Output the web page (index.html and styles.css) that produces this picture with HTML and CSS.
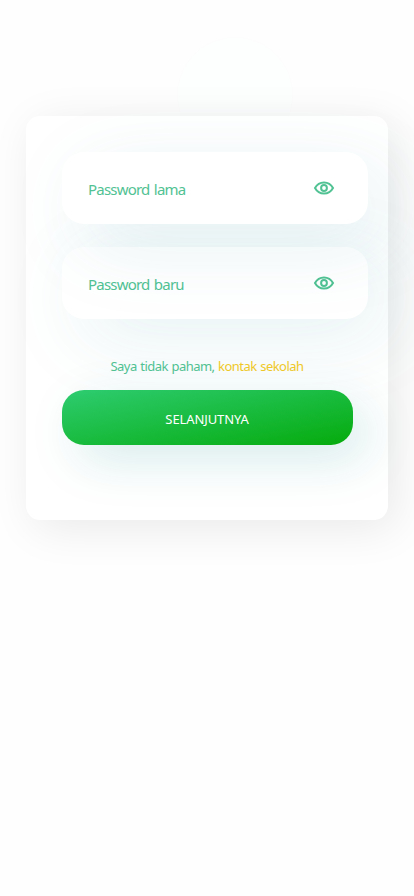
FILE: index.html
```html
<!DOCTYPE html>
<html lang="id">
<head>
<meta charset="UTF-8">
<meta name="viewport" content="width=device-width, initial-scale=1">
<title>Password</title>
<link rel="stylesheet" href="styles.css">
</head>
<body>
<main class="page">
  <form class="card">
    <div class="field field-old">
      <span class="label label-old">Password lama</span>
      <svg class="eye" viewBox="0 0 22 16" aria-hidden="true"><path d="M2 8C4 4.300 7.100 2.400 11 2.400s7 1.900 9 5.600c-2 3.700-5.100 5.600-9 5.600S4 11.700 2 8Z"/><circle cx="11" cy="8" r="2.900"/></svg>
    </div>
    <div class="field field-new">
      <span class="label label-new">Password baru</span>
      <svg class="eye" viewBox="0 0 22 16" aria-hidden="true"><path d="M2 8C4 4.300 7.100 2.400 11 2.400s7 1.900 9 5.600c-2 3.700-5.100 5.600-9 5.600S4 11.700 2 8Z"/><circle cx="11" cy="8" r="2.900"/></svg>
    </div>
    <p class="help">Saya tidak paham, <a class="contact">kontak sekolah</a></p>
    <button class="next" type="button">SELANJUTNYA</button>
  </form>
</main>
</body>
</html>
```
FILE: styles.css
```css
* { box-sizing: border-box; }
body {
  margin: 0;
  background: #fefefe;
  font-family: "Segoe UI", "Noto Sans", "Open Sans", sans-serif;
  color: #51c293;
}
.page {
  position: relative;
  min-height: 896px;
  padding: 116px 26px 0;
  overflow: hidden;
}
.page::before {
  content: "";
  position: absolute;
  left: 178px;
  top: 38px;
  width: 114px;
  height: 114px;
  border-radius: 50%;
  background: #fdfefe;
  box-shadow: 0 0 5px rgba(0, 0, 0, .012);
}
.card {
  position: relative;
  isolation: isolate;
  height: 404px;
  padding: 36px 20px 0 36px;
  border-radius: 14px;
  background: #fff;
  box-shadow: 8px 8px 45px rgba(0, 0, 0, .085);
}
.field {
  position: relative;
  display: flex;
  align-items: center;
  justify-content: space-between;
  width: 306px;
  height: 72px;
  padding: 0 33px 0 26px;
  border-radius: 22px;
  background: #fff;
}
.field-old {
  z-index: 2;
  box-shadow: 20px 20px 80px rgba(47, 143, 157, .12);
}
.field-new {
  z-index: 1;
  margin-top: 23px;
  box-shadow: 20px 15px 80px rgba(47, 143, 157, .13);
}
.label {
  padding-top: 2px;
  font-size: 15px;
  line-height: 20px;
  letter-spacing: -.8px;
  word-spacing: 1.3px;
}
.eye {
  width: 22px;
  height: 16px;
  fill: none;
  stroke: #51c293;
  stroke-width: 2;
}
.help {
  position: relative;
  z-index: 3;
  width: 290px;
  margin: 38px 0 0;
  font-size: 13px;
  line-height: 18px;
  letter-spacing: -.53px;
  word-spacing: .7px;
  text-align: center;
  white-space: nowrap;
}
.contact { color: #f0c929; }
.next {
  position: relative;
  z-index: 3;
  display: block;
  width: 291px;
  height: 55px;
  margin: 15px 0 0 -.5px;
  padding: 3px 0 0;
  border: 0;
  border-radius: 22px;
  background: linear-gradient(to bottom right, #2ecc71, #05ab0c);
  box-shadow: 15px 15px 50px rgba(0, 128, 128, .16);
  color: #fff;
  font: 13px/18px "Segoe UI", "Noto Sans", "Open Sans", sans-serif;
  letter-spacing: -.1px;
}
```
